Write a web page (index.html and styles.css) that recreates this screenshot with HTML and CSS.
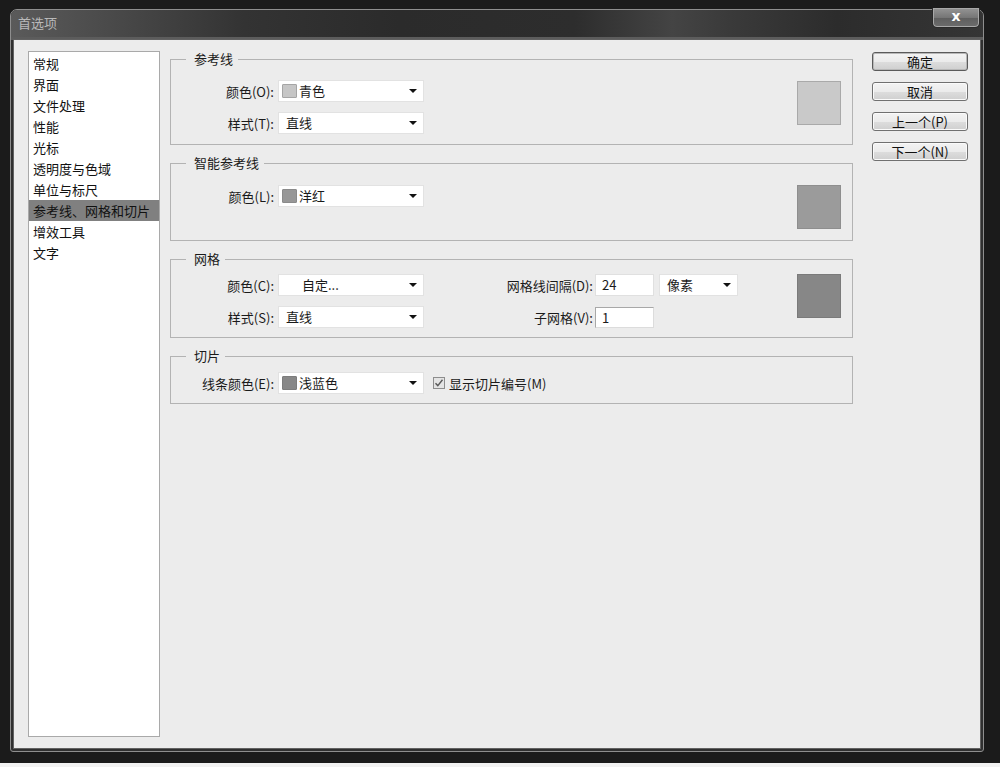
FILE: index.html
```html
<!DOCTYPE html>
<html lang="zh-CN">
<head>
<meta charset="utf-8">
<title>首选项</title>
<link rel="stylesheet" href="styles.css">
</head>
<body>
<div class="screen">
  <div class="window">
    <div class="titlebar"><span class="title">首选项</span></div>
    <button class="close" type="button">x</button>
    <div class="client">
      <ul class="nav">
        <li>常规</li>
        <li>界面</li>
        <li>文件处理</li>
        <li>性能</li>
        <li>光标</li>
        <li>透明度与色域</li>
        <li>单位与标尺</li>
        <li class="active">参考线、网格和切片</li>
        <li>增效工具</li>
        <li>文字</li>
      </ul>

      <div class="main">
        <fieldset class="group g1">
          <legend>参考线</legend>
          <div class="group-body">
            <div class="fields">
              <div class="row">
                <span class="label">颜色(O):</span>
                <div class="select"><span class="chip chip-cyan"></span><span class="val">青色</span><span class="arrow"></span></div>
              </div>
              <div class="row">
                <span class="label">样式(T):</span>
                <div class="select plain"><span class="val">直线</span><span class="arrow"></span></div>
              </div>
            </div>
            <div class="swatch sw-cyan"></div>
          </div>
        </fieldset>

        <fieldset class="group g2">
          <legend>智能参考线</legend>
          <div class="group-body">
            <div class="fields">
              <div class="row">
                <span class="label">颜色(L):</span>
                <div class="select"><span class="chip chip-magenta"></span><span class="val">洋红</span><span class="arrow"></span></div>
              </div>
            </div>
            <div class="swatch sw-magenta"></div>
          </div>
        </fieldset>

        <fieldset class="group g3">
          <legend>网格</legend>
          <div class="group-body">
            <div class="fields">
              <div class="row">
                <span class="label">颜色(C):</span>
                <div class="select custom"><span class="val">自定...</span><span class="arrow"></span></div>
                <span class="label label-wide">网格线间隔(D):</span>
                <div class="input">24</div>
                <div class="select unit"><span class="val">像素</span><span class="arrow"></span></div>
              </div>
              <div class="row">
                <span class="label">样式(S):</span>
                <div class="select plain"><span class="val">直线</span><span class="arrow"></span></div>
                <span class="label label-wide">子网格(V):</span>
                <div class="input input-focus">1</div>
              </div>
            </div>
            <div class="swatch sw-grid"></div>
          </div>
        </fieldset>

        <fieldset class="group g4">
          <legend>切片</legend>
          <div class="group-body">
            <div class="fields">
              <div class="row">
                <span class="label">线条颜色(E):</span>
                <div class="select"><span class="chip chip-blue"></span><span class="val">浅蓝色</span><span class="arrow"></span></div>
                <span class="check"><svg viewBox="0 0 12 12" width="12" height="12"><path d="M2.5 6.2 L4.8 8.6 L9.5 2.8" fill="none" stroke="#5a5a5a" stroke-width="1.4"/></svg></span>
                <span class="check-label">显示切片编号(M)</span>
              </div>
            </div>
          </div>
        </fieldset>
      </div>

      <div class="actions">
        <button class="btn default" type="button">确定</button>
        <button class="btn" type="button">取消</button>
        <button class="btn" type="button">上一个(P)</button>
        <button class="btn" type="button">下一个(N)</button>
      </div>
    </div>
  </div>
</div>
</body>
</html>
```
FILE: styles.css
```css
* { box-sizing: border-box; }

html, body {
  margin: 0;
  padding: 0;
  background: #f2f2f2;
  font-family: "Noto Sans CJK SC", "Noto Sans", sans-serif;
  font-size: 13px;
  color: #1a1a1a;
}

.screen {
  width: 1000px;
  height: 763px;
  background: #1b1b1b;
  padding: 9px 16px 11px 10px;
}

.window {
  position: relative;
  height: 100%;
  display: flex;
  flex-direction: column;
  border: 1px solid #8e8e8e;
  border-radius: 7px 7px 3px 3px;
  background: #303030;
  padding: 0 3px 3px;
}

.titlebar {
  height: 30px;
  flex: none;
  border-bottom: 3px solid #5c5c5c;
  border-radius: 6px 6px 0 0;
  margin: 0 -3px;
  padding-left: 7px;
  display: flex;
  align-items: center;
  background: linear-gradient(90deg, #5a5a5a 0%, #474747 12%, #333 24%, #2b2b2b 40%, #2d2d2d 58%, #444 68%, #3a3a3a 74%, #2c2c2c 85%, #353535 100%);
}

.title {
  color: #b9b9b9;
  font-size: 13px;
  line-height: 16px;
  padding-bottom: 2px;
}

.close {
  position: absolute;
  top: -2px;
  right: 3px;
  width: 48px;
  height: 20px;
  padding: 0 0 3px;
  margin: 0;
  border: 1px solid #2a2a2a;
  border-top: none;
  border-radius: 0 0 5px 5px;
  box-shadow: inset 0 0 0 1px #a8a8a8;
  background: linear-gradient(#959595, #767676 50%, #5e5e5e 51%, #6c6c6c);
  color: #fff;
  font-family: "DejaVu Sans", sans-serif;
  font-weight: bold;
  font-size: 14px;
  line-height: 14px;
}

.client {
  flex: 1;
  display: flex;
  background: #ececec;
  box-shadow: 0 0 0 1px #626262;
  padding: 11px 12px 11px 14px;
}

.nav {
  width: 132px;
  flex: none;
  margin: 0;
  padding: 1px 0;
  list-style: none;
  background: #fff;
  border: 1px solid #a9a9a9;
}

.nav li {
  line-height: 21px;
  height: 21px;
  padding-left: 4px;
  white-space: nowrap;
  color: #111;
}

.nav li.active {
  background: #808080;
  color: #111;
}

.main {
  width: 683px;
  flex: none;
  margin-left: 10px;
  display: flex;
  flex-direction: column;
}

.group {
  margin: 0;
  padding: 0 11px 9px 0;
  border: 1px solid #b3b3b3;
  min-width: 0;
}

.group legend {
  margin-left: 15px;
  padding: 0 5px 0 8px;
  line-height: 16px;
  color: #1a1a1a;
}

.g1 { padding-top: 13px; padding-bottom: 10px; }
.g2 { margin-top: 10px; padding-top: 14px; padding-bottom: 11px; }
.g3 { margin-top: 10px; padding-top: 7px; }
.g4 { margin-top: 10px; padding-top: 8px; }

.group-body {
  display: flex;
  align-items: flex-start;
}

.fields {
  display: flex;
  flex-direction: column;
  gap: 10px;
}

.row {
  display: flex;
  align-items: center;
  height: 22px;
}

.label {
  width: 103px;
  margin-right: 4px;
  text-align: right;
  white-space: nowrap;
  color: #1a1a1a;
}

.label-wide {
  width: 169px;
  margin-right: 2px;
}

.select {
  width: 146px;
  height: 22px;
  flex: none;
  display: flex;
  align-items: center;
  background: #fff;
  border: 1px solid #e2e2e2;
  padding: 0 6px 0 3px;
}

.select.plain { padding-left: 7px; }
.select.custom { padding-left: 23px; }
.select.unit { width: 79px; margin-left: 5px; padding-left: 7px; }

.chip {
  width: 15px;
  height: 14px;
  margin-right: 2px;
  border: 1px solid #a5a5a5;
  border-radius: 1px;
}

.chip-cyan { background: #c6c6c6; }
.chip-magenta { background: #979797; border-color: #8a8a8a; }
.chip-blue { background: #878787; border-color: #7c7c7c; }

.val {
  line-height: 20px;
  white-space: nowrap;
}

.arrow {
  margin-left: auto;
  width: 0;
  height: 0;
  border-left: 4px solid transparent;
  border-right: 4px solid transparent;
  border-top: 4px solid #111;
}

.input {
  width: 59px;
  height: 22px;
  flex: none;
  background: #fff;
  border: 1px solid #e0e0e0;
  padding-left: 6px;
  line-height: 20px;
}

.input-focus {
  height: 21px;
  border-color: #a8a8a8 #dcdcdc #dcdcdc #a8a8a8;
}

.swatch {
  margin-left: auto;
  width: 44px;
  height: 44px;
  flex: none;
  border: 1px solid #a9a9a9;
}

.sw-cyan { margin-top: 1px; background: #c9c9c9; }
.sw-magenta { background: #9b9b9b; border-color: #8e8e8e; }
.sw-grid { background: #878787; border-color: #7a7a7a; }

.check {
  width: 12px;
  height: 12px;
  margin-left: 9px;
  margin-right: 4px;
  border: 1px solid #8d8d8d;
  background: #e4e4e4;
  display: flex;
}

.check svg { display: block; margin: -1px; }

.check-label { white-space: nowrap; }

.actions {
  width: 96px;
  flex: none;
  margin-left: 19px;
  padding-top: 1px;
  display: flex;
  flex-direction: column;
  gap: 11px;
}

.btn {
  height: 19px;
  margin: 0;
  padding: 0;
  border: 1px solid #707070;
  border-radius: 3px;
  background: linear-gradient(#f3f3f3, #ebebeb 50%, #dddddd 51%, #cfcfcf);
  box-shadow: inset 0 0 0 1px #fafafa;
  font-family: "Noto Sans CJK SC", "Noto Sans", sans-serif;
  font-size: 13px;
  line-height: 16px;
  color: #111;
}

.btn.default {
  border-color: #5a5a5a;
  box-shadow: inset 0 0 0 1px #b8b8b8;
}
```
